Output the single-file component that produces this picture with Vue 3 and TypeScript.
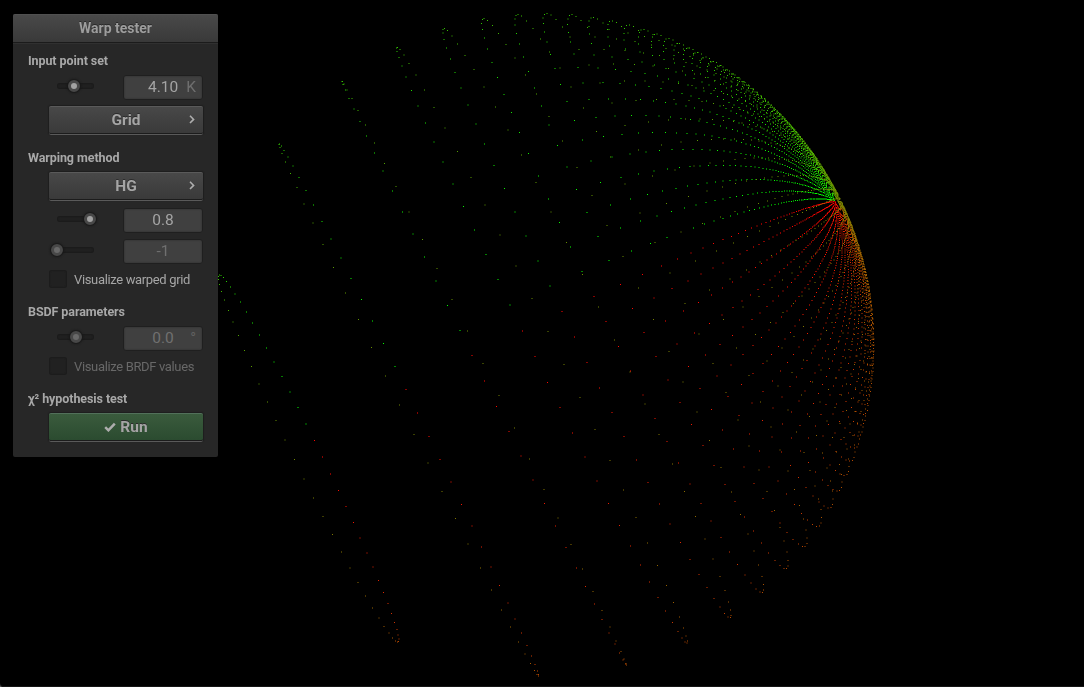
<script setup lang="ts">
import { onMounted, ref } from 'vue'

const WIDTH = 1084
const HEIGHT = 687
const GRID = 64
const ANISOTROPY = 0.785
const DISTANCE = 8
const FOCAL = 2629
const CENTER_X = 542.7
const CENTER_Y = 344.6
const TILT = (25.97 * Math.PI) / 180
const SEAM = (-7 * Math.PI) / 180
const POLE_Z = -0.035

interface WarpedPoint {
  x: number
  y: number
  z: number
  r: number
  g: number
}

const canvas = ref<HTMLCanvasElement | null>(null)

// Henyey-Greenstein warp of a regular grid, projected onto the screen
function warpGrid(): WarpedPoint[] {
  const g = ANISOTROPY
  const poleR = Math.sqrt(1 - POLE_Z * POLE_Z)
  const cu = Math.cos(TILT)
  const su = Math.sin(TILT)
  const out: WarpedPoint[] = []
  for (let j = 0; j < GRID; j++) {
    const beta = SEAM - ((j + 0.5) / GRID) * 2 * Math.PI
    for (let k = 0; k < GRID; k++) {
      const t = (1 - g * g) / (1 - g + (2 * g * (k + 0.5)) / GRID)
      const c = (1 + g * g - t * t) / (2 * g)
      const s = Math.sqrt(Math.max(0, 1 - c * c))
      const u = c * poleR + s * Math.cos(beta) * POLE_Z
      const v = s * Math.sin(beta)
      const z = c * POLE_Z - s * Math.cos(beta) * poleR
      const scale = FOCAL / (DISTANCE - z)
      const shade = (j * GRID + k) / (GRID * GRID)
      out.push({
        x: CENTER_X + scale * (u * cu + v * su),
        y: CENTER_Y - scale * (u * su - v * cu),
        z,
        r: 1.08 * Math.pow(shade, 1.2),
        g: 1.03 * Math.pow(1 - shade, 1.05),
      })
    }
  }
  return out.sort((a, b) => a.z - b.z)
}

onMounted(() => {
  const ctx = canvas.value?.getContext('2d')
  if (!ctx) return
  const w = WIDTH * 2
  const h = HEIGHT * 2
  const red = new Float32Array(w * h)
  const green = new Float32Array(w * h)
  for (const p of warpGrid()) {
    const px = Math.round(p.x * 2) - 1
    const py = Math.round(p.y * 2) - 1
    for (let dy = 0; dy < 2; dy++) {
      for (let dx = 0; dx < 2; dx++) {
        const x = px + dx
        const y = py + dy
        if (x < 0 || y < 0 || x >= w || y >= h) continue
        red[y * w + x] = p.r
        green[y * w + x] = p.g
      }
    }
  }
  const image = ctx.createImageData(WIDTH, HEIGHT)
  for (let y = 0; y < HEIGHT; y++) {
    for (let x = 0; x < WIDTH; x++) {
      const a = y * 2 * w + x * 2
      const o = (y * WIDTH + x) * 4
      image.data[o] = ((red[a] + red[a + 1] + red[a + w] + red[a + w + 1]) / 4) * 255
      image.data[o + 1] = ((green[a] + green[a + 1] + green[a + w] + green[a + w + 1]) / 4) * 255
      image.data[o + 3] = 255
    }
  }
  ctx.putImageData(image, 0, 0)
})
</script>

<template>
  <main class="screen">
    <canvas ref="canvas" class="plot" :width="WIDTH" :height="HEIGHT"></canvas>
    <section class="panel">
      <header class="title">Warp tester</header>
      <div class="body">
        <h2 class="heading">Input point set</h2>
        <div class="row">
          <div class="slider"><i class="knob k-points"></i></div>
          <div class="field with-unit"><span>4.10</span><span class="unit">K</span></div>
        </div>
        <button class="button grid-button">Grid
          <svg class="chevron" viewBox="0 0 6 9"><path d="M1 .8 4.6 4.4 1 8" /></svg>
        </button>
        <h2 class="heading next">Warping method</h2>
        <button class="button">HG
          <svg class="chevron" viewBox="0 0 6 9"><path d="M1 .8 4.6 4.4 1 8" /></svg>
        </button>
        <div class="row r-value">
          <div class="slider"><i class="knob k-value"></i></div>
          <div class="field">0.8</div>
        </div>
        <div class="row r-second disabled">
          <div class="slider"><i class="knob k-second"></i></div>
          <div class="field">-1</div>
        </div>
        <div class="check"><i class="box"></i>Visualize warped grid</div>
        <h2 class="heading next">BSDF parameters</h2>
        <div class="row disabled">
          <div class="slider"><i class="knob k-angle"></i></div>
          <div class="field">0.0<span class="degree">°</span></div>
        </div>
        <div class="check disabled">
          <i class="box"></i>Visualize BRDF values
        </div>
        <h2 class="heading next">χ² hypothesis test</h2>
        <button class="button run">
          <svg class="tick" viewBox="0 0 12 10"><path d="M1.2 5.2 4.4 8.3 10.8 1.6" /></svg>Run
        </button>
      </div>
    </section>
  </main>
</template>

<style>
body {
  margin: 0;
  background: #000;
}
</style>

<style scoped>
.screen {
  position: relative;
  width: 1084px;
  height: 687px;
  overflow: hidden;
  background: #000;
  font-family: Roboto, 'Noto Sans', sans-serif;
  color: #a6a6a6;
}
.screen::after {
  content: '';
  position: absolute;
  inset: 0;
  border-bottom: 1px solid #161616;
  border-bottom-left-radius: 4px;
  box-shadow: 0 0 0 4px #555;
  pointer-events: none;
}
.plot {
  position: absolute;
  inset: 0;
  display: block;
}
.panel {
  position: absolute;
  left: 13px;
  top: 14px;
  width: 205px;
  height: 443px;
  border-radius: 2px;
  background: #272727;
  overflow: hidden;
}
.title {
  box-sizing: border-box;
  height: 29px;
  border-top: 1px solid #505050;
  border-bottom: 1px solid #1b1b1b;
  background: linear-gradient(#494949, #393939);
  box-shadow: 0 1px #303030;
  font-size: 14px;
  font-weight: 700;
  line-height: 27px;
  text-align: center;
  color: #9d9d9d;
  text-shadow: 0 -1px #2a2a2a;
}
.body {
  padding: 9px 15px 0;
}
.heading {
  margin: 0;
  height: 18px;
  font-size: 12.5px;
  font-weight: 700;
  line-height: 18px;
  letter-spacing: -0.08px;
  color: #a8a8a8;
  white-space: nowrap;
}
.heading.next { margin-top: 15px; }
.row {
  display: flex;
  align-items: center;
  justify-content: space-between;
  height: 25px;
  width: 146px;
  margin: 5px 0 0 29px;
}
.slider {
  position: relative;
  width: 37px;
  height: 6px;
  margin-bottom: 3px;
  border-radius: 3px;
  background: #202020;
  box-shadow: inset 0 0 1px 1px #1b1b1b;
}
.knob {
  position: absolute;
  top: -3px;
  width: 6px;
  height: 6px;
  margin-left: -6px;
  border: 3px solid #484848;
  border-radius: 50%;
  background: #a2a2a2;
  box-shadow: 0 0 2px 1px #161616;
}
.k-points { left: 17.3px; }
.k-value { left: 33px; }
.k-second { left: 0; }
.k-angle { left: 18.5px; }
.disabled .knob {
  background: #696969;
}
.field {
  position: relative;
  box-sizing: border-box;
  width: 80px;
  height: 25px;
  border: 1px solid #1f1f1f;
  border-radius: 3px;
  background: #404040;
  box-shadow: inset 0 0 1px 1px #393939;
  font-size: 15.5px;
  line-height: 23px;
  text-align: center;
  color: #a4a4a4;
}
.with-unit {
  display: flex;
  justify-content: flex-end;
  gap: 8px;
  padding-right: 6px;
}
.unit { color: #6f6f6f; }
.degree {
  position: absolute;
  right: 6px;
  top: 0;
  color: #606060;
}
.disabled { color: #686868; }
.disabled .field { color: #707070; }
.button {
  position: relative;
  display: flex;
  align-items: center;
  justify-content: center;
  box-sizing: border-box;
  width: 154px;
  height: 28px;
  margin: 5px 0 0 21px;
  padding: 0;
  border: 0;
  border-top: 1px solid #5a5a5a;
  border-bottom: 1px solid #1c1c1c;
  border-radius: 2px;
  background: linear-gradient(#484848, #3a3a3a);
  box-shadow: 0 1px #5a5a5a, 0 0 1px 1px #1e1e1e;
  font: 700 15.5px Roboto, sans-serif;
  color: #a5a5a5;
  text-shadow: 0 -1px #2c2c2c;
}
.grid-button { margin-top: 6px; }
.chevron {
  position: absolute;
  right: 8px;
  top: 8px;
  width: 6px;
  height: 9px;
}
.chevron path,
.tick path {
  fill: none;
  stroke: #adadad;
  stroke-width: 1.6;
}
.r-value { margin-top: 8px; }
.r-second { margin-top: 6px; }
.check {
  display: flex;
  align-items: center;
  height: 18px;
  margin: 6px 0 0 21px;
  font-size: 13px;
  letter-spacing: -0.35px;
  white-space: nowrap;
}
.box {
  width: 18px;
  height: 18px;
  margin-right: 7px;
  border-radius: 3px;
  background: #212121;
  box-shadow: inset 0 0 1px 1px #1c1c1c;
}
.run {
  border-top-color: #52705a;
  background: linear-gradient(#3a5b3d, #2b4b30);
}
.tick {
  width: 12px;
  height: 10px;
  margin-right: 4px;
}
.tick path { stroke-width: 2.5; }
</style>
